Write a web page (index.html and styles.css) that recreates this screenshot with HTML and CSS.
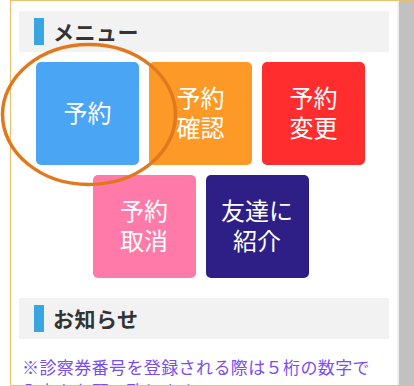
FILE: index.html
```
<!DOCTYPE html>
<html lang="ja">
<head>
<meta charset="utf-8">
<link rel="stylesheet" href="styles.css">
</head>
<body>
<div class="stage">
  <div class="frame">
    <div class="content">
      <h2 class="heading"><span class="marker"></span><span class="heading-text">メニュー</span></h2>
      <div class="menu">
        <a class="btn btn-blue">予約</a>
        <a class="btn btn-orange">予約<br>確認</a>
        <a class="btn btn-red">予約<br>変更</a>
        <a class="btn btn-pink">予約<br>取消</a>
        <a class="btn btn-navy">友達に<br>紹介</a>
      </div>
      <h2 class="heading heading-news"><span class="marker"></span><span class="heading-text">お知らせ</span></h2>
      <p class="notice">※診察券番号を登録される際は５桁の数字で入力をお願い致します。</p>
    </div>
    <div class="scrollbar"><div class="thumb"></div></div>
  </div>
  <svg class="annot" width="200" height="200" viewBox="0 0 200 200">
    <ellipse cx="89" cy="114.5" rx="86.5" ry="70" fill="none" stroke="#e2781e" stroke-width="3.5"/>
  </svg>
</div>
</body>
</html>
```
FILE: styles.css
```
html, body {
  margin: 0;
  padding: 0;
  background: #ffffff;
}
body {
  font-family: "Noto Sans CJK JP", "Noto Sans", sans-serif;
}
.stage {
  position: relative;
  width: 414px;
  height: 386px;
  overflow: hidden;
}
.frame {
  margin-left: 10px;
  width: 402px;
  height: 384px;
  border: 1px solid #e9bf6d;
  display: flex;
  overflow: hidden;
}
.content {
  width: 386px;
  padding: 10px 8px 0;
  box-sizing: border-box;
  flex: none;
}
.scrollbar {
  width: 16px;
  background: #f1f1f1;
  display: flex;
  flex: none;
}
.thumb {
  margin-left: 2px;
  flex: 1;
  background: #c1c1c1;
}
.heading {
  margin: 0;
  height: 41px;
  background: #f2f2f2;
  display: flex;
  align-items: center;
  padding: 0 15px;
  gap: 9px;
  box-sizing: border-box;
}
.marker {
  width: 10px;
  height: 27px;
  background: #39a6e2;
  flex: none;
}
.heading-text {
  font-size: 21px;
  font-weight: bold;
  color: #333333;
  line-height: 27px;
  letter-spacing: 0.5px;
}
.heading-news {
  margin-top: 20px;
}
.menu {
  width: 329px;
  margin: 10px 0 0 17px;
  display: flex;
  flex-wrap: wrap;
  justify-content: center;
  gap: 10px;
}
.btn {
  width: 103px;
  height: 103px;
  border-radius: 5px;
  display: flex;
  align-items: center;
  justify-content: center;
  text-align: center;
  color: #ffffff;
  font-size: 24px;
  line-height: 30px;
  padding-bottom: 3px;
  box-sizing: border-box;
}
.btn-blue { background: #4ba5f5; }
.btn-orange { background: #fd9a27; }
.btn-red { background: #ff2d2d; }
.btn-pink { background: #ff7aa9; }
.btn-navy { background: #2e1f86; }
.notice {
  margin: 16px 0 0;
  padding: 0 12px 0 3px;
  font-size: 17px;
  letter-spacing: 0.4px;
  line-height: 24px;
  color: #7a4cf5;
}
.annot {
  position: absolute;
  left: 0;
  top: 0;
  pointer-events: none;
}
```
